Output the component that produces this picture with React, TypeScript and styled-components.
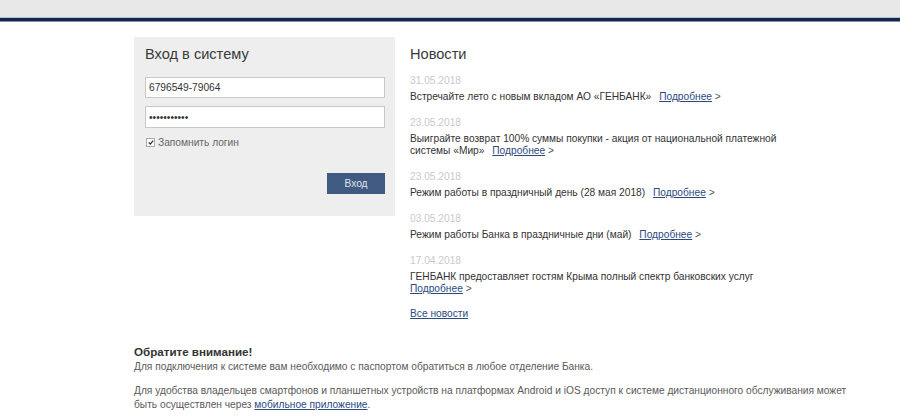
import React from 'react';
import styled, { createGlobalStyle } from 'styled-components';

const Global = createGlobalStyle`
  body {
    margin: 0;
    background: #fff;
    font-family: "Liberation Sans", Arial, sans-serif;
    color: #333;
  }
`;

const TopBar = styled.div`
  height: 17px;
  background: #e8e8e8;
  border-bottom: 1px solid #b3c3da;
`;

const Stripe = styled.div`
  height: 3px;
  background: #16264a;
  border-bottom: 1px solid #7d8fae;
`;

const Page = styled.div`
  width: 720px;
  margin: 15px 0 0 134px;
`;

const Columns = styled.div`
  display: flex;
  align-items: flex-start;
  gap: 15px;
`;

const LoginPanel = styled.form`
  width: 261px;
  box-sizing: border-box;
  background: #eeeeee;
  padding: 7px 10px 22px 11px;
  display: flex;
  flex-direction: column;
`;

const Title = styled.h2`
  margin: 0 0 13px;
  font-size: 14.6px;
  line-height: 20px;
  font-weight: normal;
  color: #3a3a3a;
`;

const Field = styled.input<{ $gap?: number }>`
  box-sizing: border-box;
  width: 240px;
  height: ${p => (p.$gap ? 21 : 22)}px;
  margin: 0 0 ${p => p.$gap ?? 0}px;
  padding: 0 3px;
  border: 1px solid #c8c8c8;
  background: #fff;
  font-family: "Liberation Sans", Arial, sans-serif;
  font-size: 10.2px;
  color: #333;
  outline: none;
`;

const Remember = styled.label`
  display: flex;
  align-items: center;
  gap: 3px;
  margin: 8px 0 0 1px;
  font-size: 10.2px;
  line-height: 13px;
  color: #666;
`;

const Check = styled.span`
  width: 7px;
  height: 7px;
  border: 1px solid #aaa;
  background: #fff;
  display: flex;
  align-items: center;
  justify-content: center;
  svg { display: block; }
`;

const ButtonRow = styled.div`
  display: flex;
  justify-content: flex-end;
  margin-top: 24px;
`;

const Button = styled.button`
  width: 58px;
  height: 21px;
  border: none;
  background: #415a82;
  color: #dfe6f0;
  font-family: "Liberation Sans", Arial, sans-serif;
  font-size: 10.2px;
  padding: 0;
`;

const News = styled.div`
  padding-top: 7px;
  flex: 1;
`;

const NewsTitle = styled(Title)`
  margin-bottom: 10px;
`;

const Item = styled.div`
  margin-bottom: 13px;
`;

const Date = styled.div`
  font-size: 10.2px;
  line-height: 14px;
  color: #c9c9c9;
  margin-bottom: 3px;
`;

const Text = styled.div<{ $top?: number }>`
  font-size: 10.2px;
  line-height: 12px;
  color: #333;
  width: 372px;
  margin-top: ${p => p.$top ?? 0}px;
`;

const Link = styled.a`
  color: #2c4a7e;
  text-decoration: underline;
  text-underline-offset: 1px;
`;

const More = styled.span<{ $inline?: boolean }>`
  margin-left: ${p => (p.$inline ? 5 : 0)}px;
  color: #555;
  white-space: nowrap;
`;

const Notice = styled.div`
  margin-top: 25px;
  font-size: 10.2px;
  color: #5a5a5a;
`;

const NoticeTitle = styled.div`
  font-size: 11.6px;
  line-height: 14px;
  font-weight: bold;
  color: #333;
  margin-bottom: 1px;
`;

const Para = styled.p`
  margin: 0 0 10px;
  line-height: 14px;
  width: 715px;
`;

const MoreLink = ({ inline }: { inline?: boolean }) => (
  <More $inline={inline}>
    <Link href="#">Подробнее</Link> &gt;
  </More>
);

const news = [
  { date: '31.05.2018', text: 'Встречайте лето с новым вкладом АО «ГЕНБАНК»', inline: true },
  { date: '23.05.2018', text: 'Выиграйте возврат 100% суммы покупки - акция от национальной платежной системы «Мир»', inline: true },
  { date: '23.05.2018', text: 'Режим работы в праздничный день (28 мая 2018)', inline: true },
  { date: '03.05.2018', text: 'Режим работы Банка в праздничные дни (май)', inline: true },
  { date: '17.04.2018', text: 'ГЕНБАНК предоставляет гостям Крыма полный спектр банковских услуг', inline: false },
];

export default function App() {
  return (
    <>
      <Global />
      <TopBar />
      <Stripe />
      <Page>
        <Columns>
          <LoginPanel onSubmit={e => e.preventDefault()}>
            <Title>Вход в систему</Title>
            <Field $gap={8} defaultValue="6796549-79064" />
            <Field type="password" defaultValue="12345678901" />
            <Remember>
              <Check>
                <svg width="6" height="5" viewBox="0 0 7 6">
                  <path d="M0.8 3 L2.7 4.8 L6.2 0.8" fill="none" stroke="#333" strokeWidth="1.5" />
                </svg>
              </Check>
              Запомнить логин
            </Remember>
            <ButtonRow>
              <Button type="submit">Вход</Button>
            </ButtonRow>
          </LoginPanel>
          <News>
            <NewsTitle>Новости</NewsTitle>
            {news.map((n, i) => (
              <Item key={i}>
                <Date>{n.date}</Date>
                <Text>
                  {n.text}
                  {n.inline ? ' ' : <br />}
                  <MoreLink inline={n.inline} />
                </Text>
              </Item>
            ))}
            <Text $top={3}>
              <Link href="#">Все новости</Link>
            </Text>
          </News>
        </Columns>
        <Notice>
          <NoticeTitle>Обратите внимание!</NoticeTitle>
          <Para>Для подключения к системе вам необходимо с паспортом обратиться в любое отделение Банка.</Para>
          <Para>
            Для удобства владельцев смартфонов и планшетных устройств на платформах Android и iOS доступ к системе дистанционного обслуживания может быть осуществлен через <Link href="#">мобильное приложение</Link>.
          </Para>
        </Notice>
      </Page>
    </>
  );
}
